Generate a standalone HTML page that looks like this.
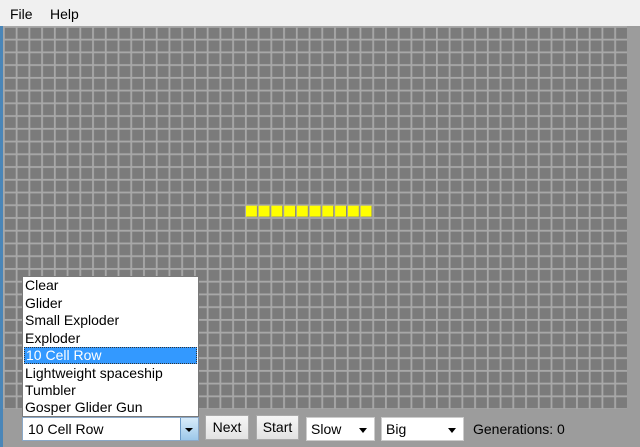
<!DOCTYPE html>
<html><head><style>
*{margin:0;padding:0;box-sizing:border-box}
body{width:640px;height:447px;overflow:hidden;background:#9c9c9c;font-family:"Liberation Sans",Arial,sans-serif;font-size:14px;position:relative}
.menu{position:absolute;left:0;top:0;width:640px;height:26px;background:#f0f0f0}
.menu span{position:absolute;top:6px;color:#000}
.abs{position:absolute}
.list{position:absolute;left:22px;top:276px;width:177px;height:141px;background:#fff;border:1px solid #7a7a7a}
.list div{position:absolute;left:2px;height:17px;line-height:17px;color:#000}
.btn{position:absolute;top:415px;height:25px;background:linear-gradient(#f6f6f6,#e2e2e2);border:1px solid #aaa;text-align:center;line-height:23px;color:#000}
.sel{position:absolute;top:417px;height:24px;background:#fff;border:1px solid #ccc;line-height:22px;padding-left:4px}
.sel i{position:absolute;right:7px;top:10px;border-left:4px solid transparent;border-right:4px solid transparent;border-top:5px solid #000}
</style></head><body>
<div class="menu"><span style="left:10px">File</span><span style="left:50px">Help</span></div>
<div class="abs" style="left:0;top:26px;width:3px;height:421px;background:#4a86b8"></div>
<svg class="abs" style="left:3px;top:26px" width="624" height="383">
<defs><pattern id="g" width="12.735" height="12.74" patternUnits="userSpaceOnUse">
<rect width="12.735" height="12.74" fill="#a8a8a8"/><rect x="1.8" y="1.8" width="10.9" height="10.9" fill="#7b7b7b"/></pattern></defs>
<rect width="624" height="383" fill="url(#g)"/>
<g fill="#ffff00">
<rect x="243.0" y="179.7" width="10.9" height="10.9"/><rect x="255.7" y="179.7" width="10.9" height="10.9"/><rect x="268.4" y="179.7" width="10.9" height="10.9"/><rect x="281.2" y="179.7" width="10.9" height="10.9"/><rect x="293.9" y="179.7" width="10.9" height="10.9"/><rect x="306.7" y="179.7" width="10.9" height="10.9"/><rect x="319.4" y="179.7" width="10.9" height="10.9"/><rect x="332.1" y="179.7" width="10.9" height="10.9"/><rect x="344.9" y="179.7" width="10.9" height="10.9"/><rect x="357.6" y="179.7" width="10.9" height="10.9"/>
</g></svg>
<div class="list">
<div style="top:0">Clear</div>
<div style="top:17.5px">Glider</div>
<div style="top:35px">Small Exploder</div>
<div style="top:52.5px">Exploder</div>
<div style="top:70px;left:1px;width:173px;background:#3399ff;color:#fff;border:1px dotted #333;padding-left:1px;line-height:15px">10 Cell Row</div>
<div style="top:87.5px">Lightweight spaceship</div>
<div style="top:105px">Tumbler</div>
<div style="top:122px">Gosper Glider Gun</div>
</div>
<div class="abs" style="left:22px;top:417px;width:177px;height:24px;background:#fff;border:1px solid #8aa8c8"></div>
<div class="abs" style="left:28px;top:421px">10 Cell Row</div>
<div class="abs" style="left:180px;top:418px;width:18px;height:22px;background:linear-gradient(#d8ecfa,#9cc8ea);border-left:1px solid #6a9ac8"></div>
<div class="abs" style="left:185px;top:428px;border-left:4px solid transparent;border-right:4px solid transparent;border-top:4px solid #000"></div>
<div class="btn" style="left:205px;width:44px">Next</div>
<div class="btn" style="left:256px;width:43px">Start</div>
<div class="sel" style="left:306px;width:69px">Slow<i></i></div>
<div class="sel" style="left:381px;width:83px">Big<i></i></div>
<div class="abs" style="left:473px;top:421px;color:#000">Generations: 0</div>
</body></html>
